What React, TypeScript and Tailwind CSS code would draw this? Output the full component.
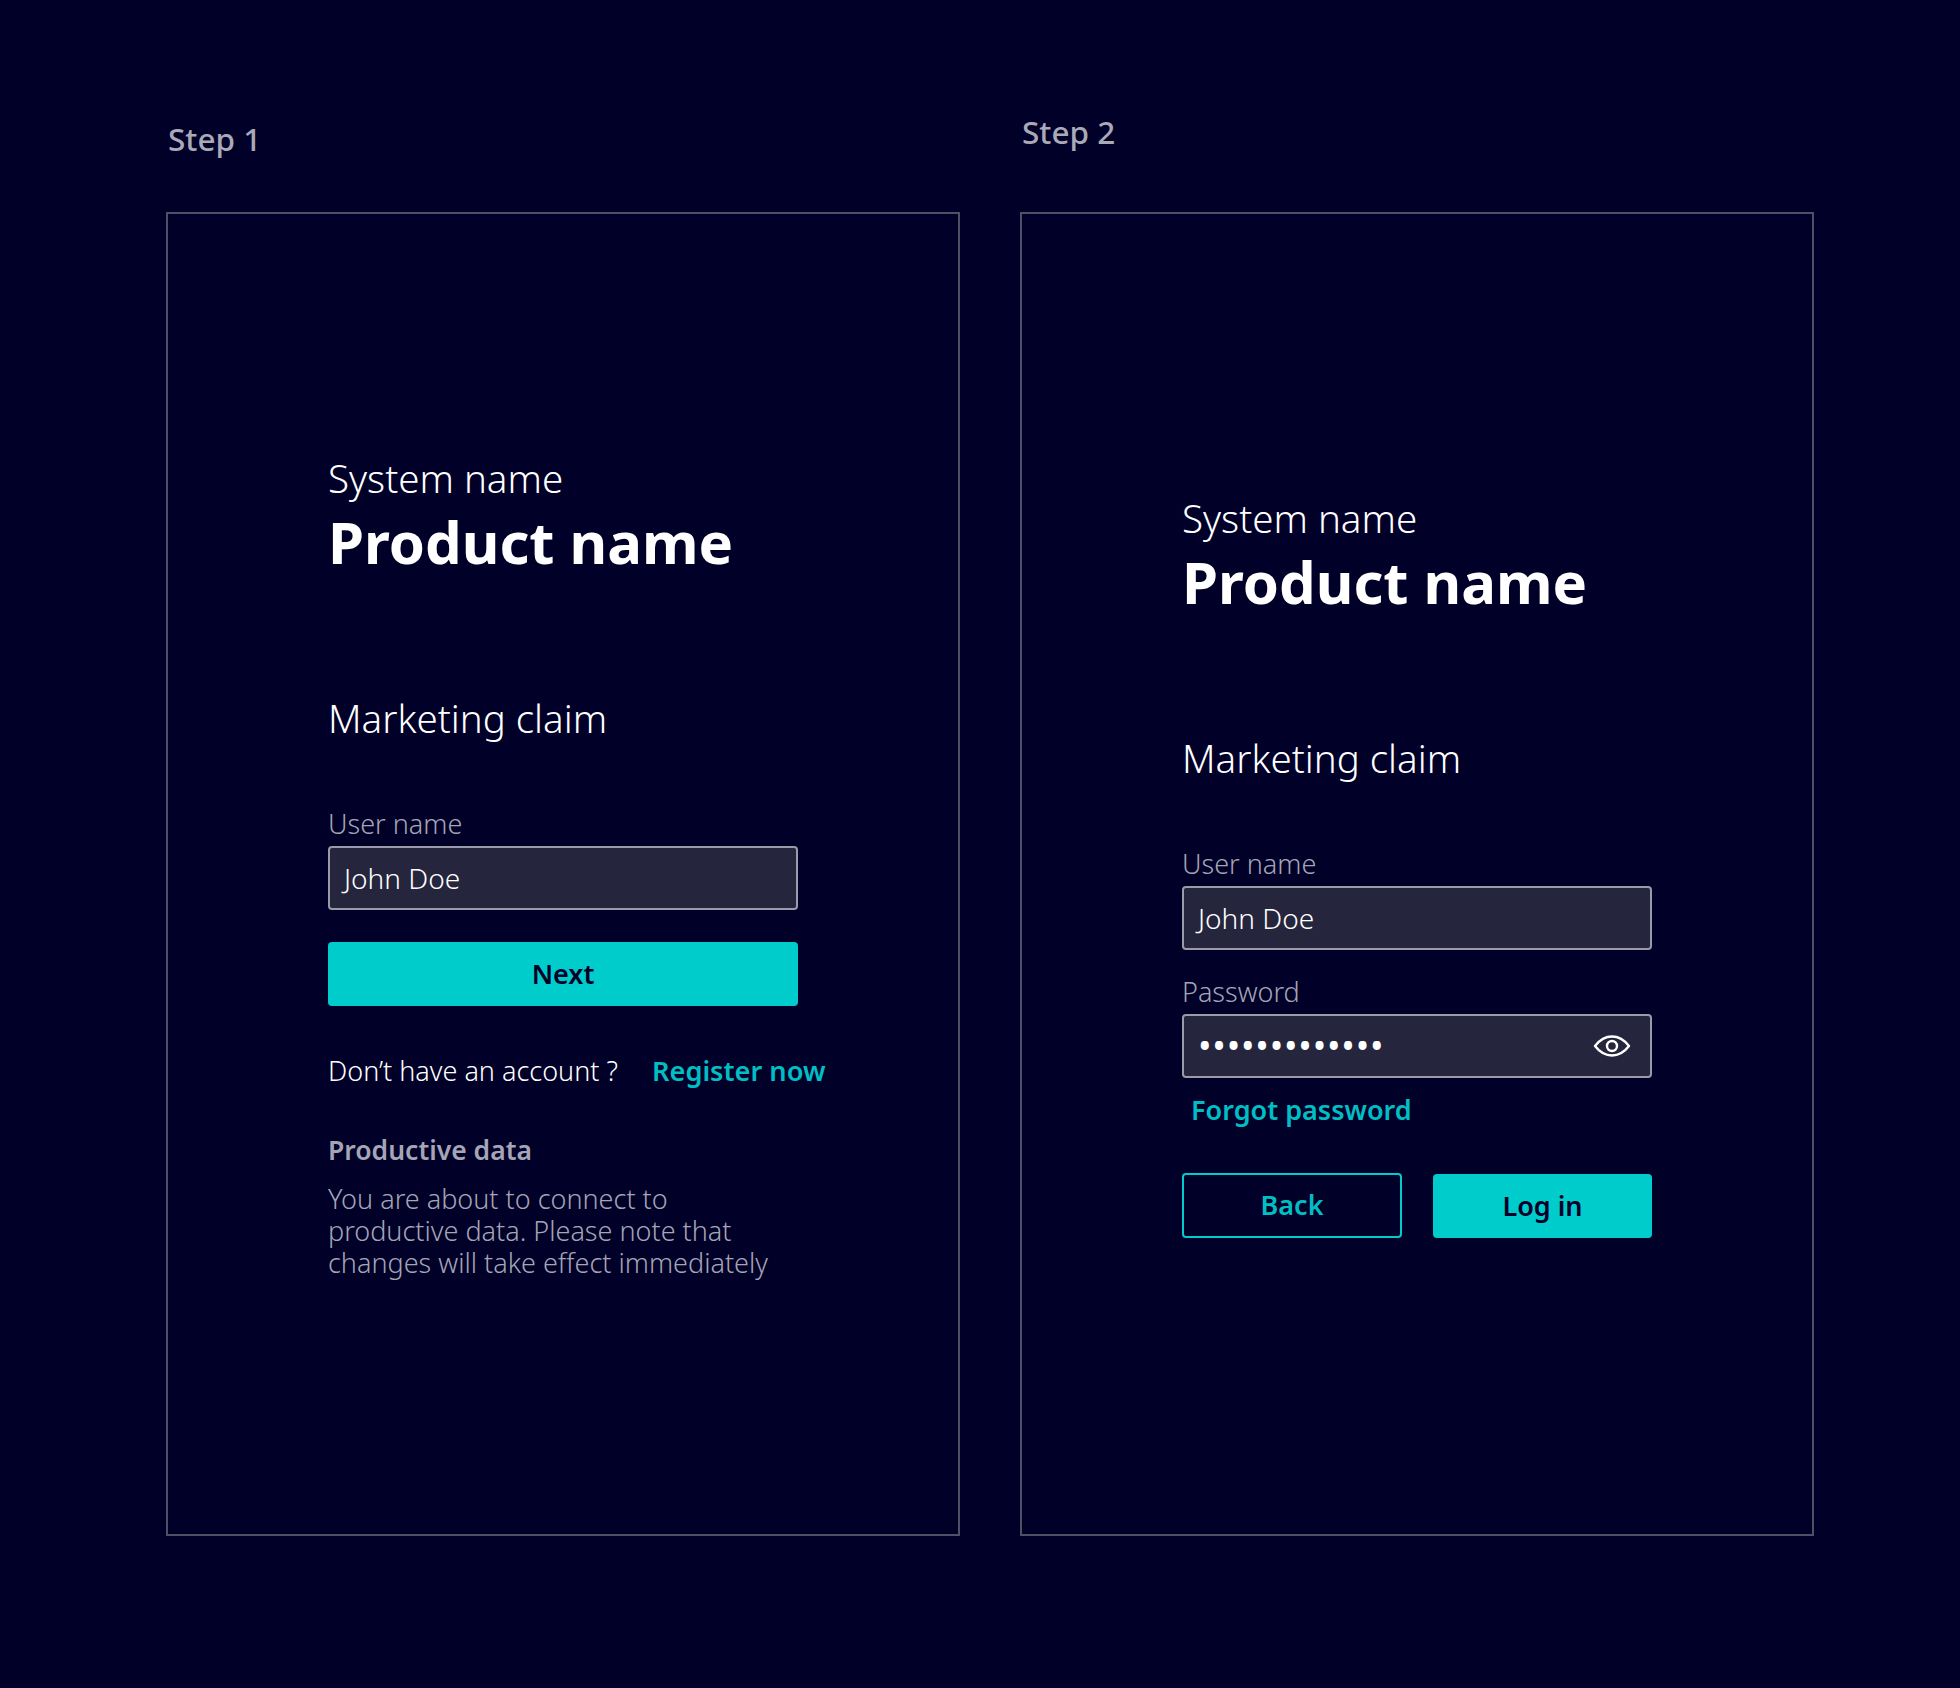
import React from "react";

const font = { fontFamily: '"Noto Sans", sans-serif' };

function Field({ label, value, className = "" }: { label: string; value: string; className?: string }) {
  return (
    <div className={className}>
      <div className="text-[27px] leading-[36px] font-light text-[#a5a5b5]">{label}</div>
      <div className="mt-[4px] flex h-[64px] w-[470px] items-center rounded-[4px] border-2 border-[#9a9aa8] bg-[#25253e] pl-[14px] text-[28px] font-light text-white">
        {value}
      </div>
    </div>
  );
}

function Heading() {
  return (
    <>
      <div className="text-[38.5px] leading-[50px] font-light text-white">System name</div>
      <div className="mt-[3px] text-[58px] leading-[72px] font-bold text-white">Product name</div>
      <div className="mt-[115px] text-[38.5px] leading-[50px] font-light text-white">Marketing claim</div>
    </>
  );
}

function EyeIcon() {
  return (
    <svg width="38" height="24" viewBox="0 0 38 24" fill="none" stroke="#ffffff" strokeWidth="2.4">
      <path d="M2 12C7 5.5 12.5 2.5 19 2.5S31 5.5 36 12C31 18.5 25.5 21.5 19 21.5S7 18.5 2 12Z" strokeLinejoin="round" />
      <circle cx="19" cy="12" r="5" />
    </svg>
  );
}

export default function App() {
  return (
    <div style={font} className="flex min-h-[1688px] w-[1960px] gap-[60px] bg-[#000028] pl-[166px]">
      {/* Step 1 */}
      <div className="w-[794px]">
        <div className="mt-[119px] h-[93px] pl-[2px] text-[31.5px] leading-[40px] font-medium text-[#a9a9b8]">Step 1</div>
        <div className="h-[1324px] border-2 border-[#4f4f66] pl-[160px] pt-[239px]">
          <Heading />
          <Field label="User name" value="John Doe" className="mt-[63px]" />
          <div className="mt-[32px] flex h-[64px] w-[470px] items-center justify-center rounded-[4px] bg-[#00cccc] text-[27px] font-semibold text-[#000028]">
            Next
          </div>
          <div className="mt-[45px] flex items-center leading-[40px]">
            <span className="w-[292px] text-[27px] font-light text-white">Don’t have an account ?</span>
            <span className="ml-[32px] text-[27.2px] font-semibold text-[#00bfc4]">Register now</span>
          </div>
          <div className="mt-[39px] text-[26.5px] leading-[40px] font-semibold text-[#a5a5b5]">Productive data</div>
          <div className="mt-[13px] w-[460px] text-[27px] leading-[32px] font-light text-[#a5a5b5]">
            You are about to connect to productive data. Please note that changes will take effect immediately
          </div>
        </div>
      </div>
      {/* Step 2 */}
      <div className="w-[794px]">
        <div className="mt-[112px] h-[100px] pl-[2px] text-[31.5px] leading-[40px] font-medium text-[#a9a9b8]">Step 2</div>
        <div className="h-[1324px] border-2 border-[#4f4f66] pl-[160px] pt-[279px]">
          <Heading />
          <Field label="User name" value="John Doe" className="mt-[63px]" />
          <div className="mt-[24px]">
            <div className="text-[27px] leading-[36px] font-light text-[#a5a5b5]">Password</div>
            <div className="mt-[4px] flex h-[64px] w-[470px] items-center justify-between rounded-[4px] border-2 border-[#9a9aa8] bg-[#25253e] pl-[14px] pr-[19px]">
              <span className="text-[36px] leading-none tracking-[0.8px] text-white">•••••••••••••</span>
              <EyeIcon />
            </div>
          </div>
          <div className="mt-[12px] pl-[9px] text-[27px] leading-[40px] font-semibold text-[#00bfc4]">Forgot password</div>
          <div className="mt-[43px] flex w-[470px] gap-[31px]">
            <div className="flex h-[65px] w-[220px] items-center justify-center rounded-[4px] border-2 border-[#00cccc] text-[27px] font-semibold text-[#00bfc4]">
              Back
            </div>
            <div className="flex h-[64px] w-[219px] items-center justify-center self-end rounded-[4px] bg-[#00cccc] text-[27px] font-semibold text-[#000028]">
              Log in
            </div>
          </div>
        </div>
      </div>
    </div>
  );
}
